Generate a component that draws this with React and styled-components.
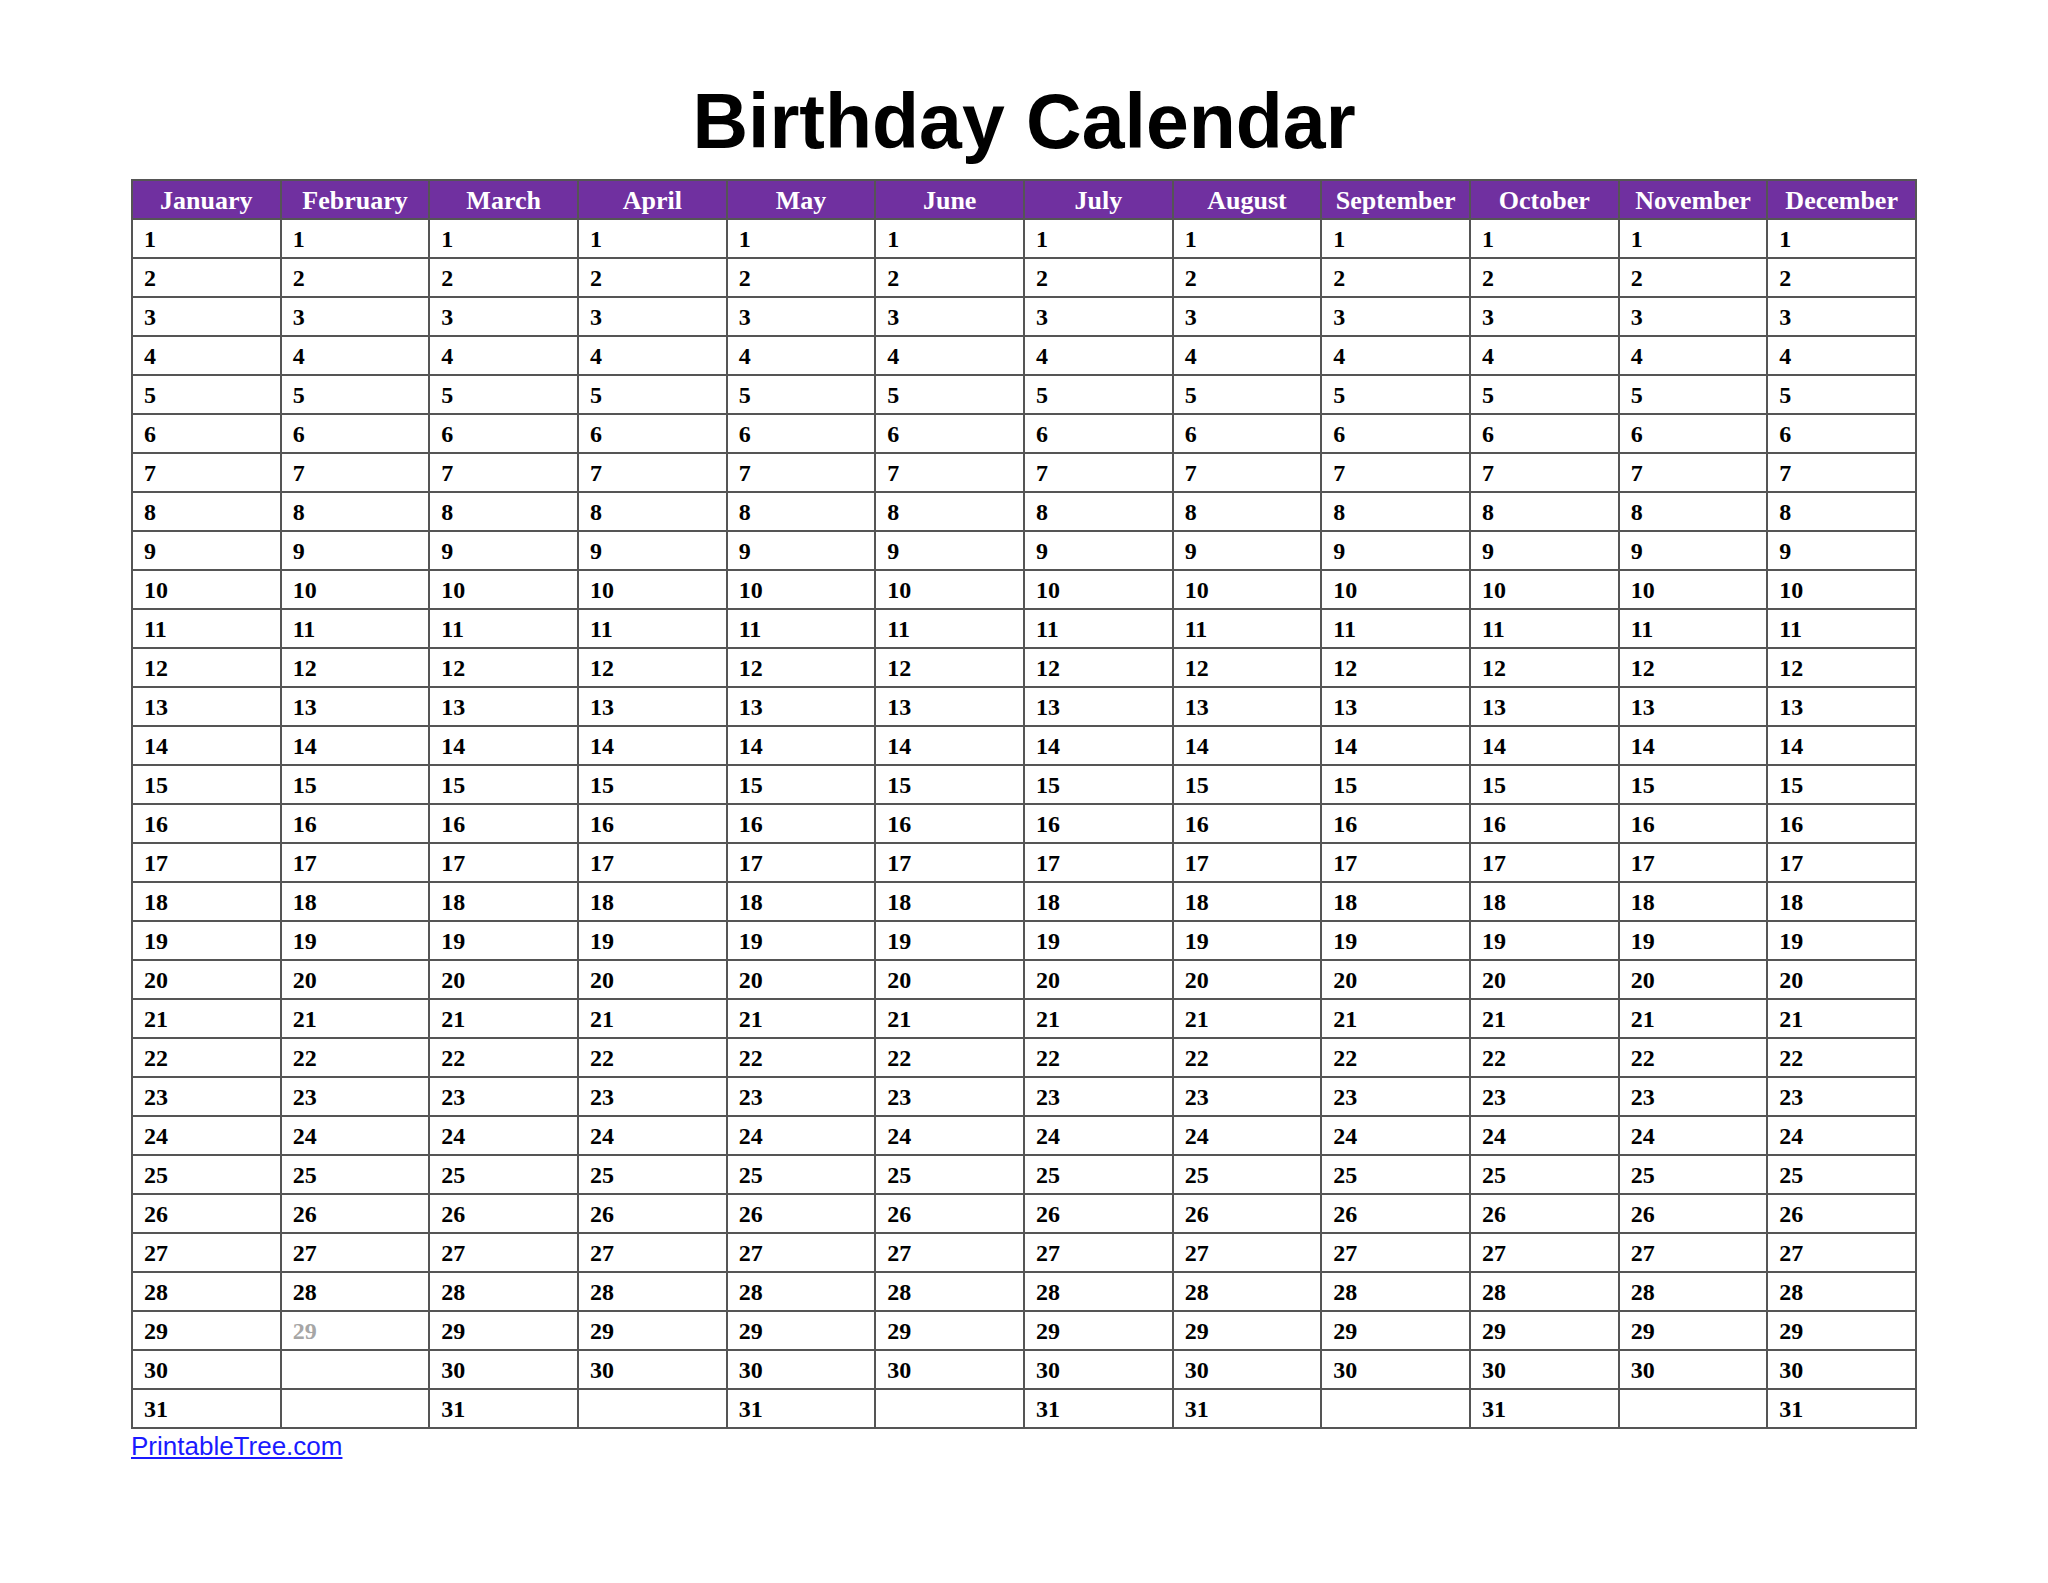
import React from 'react'
import styled, { createGlobalStyle } from 'styled-components'

const MONTHS = [
  { name: 'January', days: 31 },
  { name: 'February', days: 29 },
  { name: 'March', days: 31 },
  { name: 'April', days: 30 },
  { name: 'May', days: 31 },
  { name: 'June', days: 30 },
  { name: 'July', days: 31 },
  { name: 'August', days: 31 },
  { name: 'September', days: 30 },
  { name: 'October', days: 31 },
  { name: 'November', days: 30 },
  { name: 'December', days: 31 },
]

const GlobalStyle = createGlobalStyle`
  html, body {
    margin: 0;
    padding: 0;
    background: #ffffff;
  }
`

const Page = styled.div`
  width: 2048px;
  min-height: 1583px;
  box-sizing: border-box;
  padding: 83px 131px 0 131px;
  display: flex;
  flex-direction: column;
`

const Title = styled.h1`
  margin: 0 0 19px 0;
  font-family: 'Liberation Sans', Arial, sans-serif;
  font-weight: 700;
  font-size: 77px;
  line-height: 77px;
  text-align: center;
  color: #000;
`

const Grid = styled.div`
  display: grid;
  grid-template-columns: repeat(12, 1fr);
  grid-auto-rows: 37px;
  gap: 2px;
  padding: 2px;
  background: #555555;
  width: 1786px;
  box-sizing: border-box;
`

const HeadCell = styled.div`
  background: #7030a0;
  color: #ffffff;
  font-family: 'Liberation Serif', 'Times New Roman', serif;
  font-weight: 700;
  font-size: 26px;
  display: flex;
  align-items: center;
  justify-content: center;
  padding-top: 2px;
  box-sizing: border-box;
`

const DayCell = styled.div`
  background: #ffffff;
  color: ${(p) => (p.$muted ? '#a6a6a6' : '#000000')};
  font-family: 'Liberation Serif', 'Times New Roman', serif;
  font-weight: 700;
  font-size: 24px;
  display: flex;
  align-items: center;
  padding-left: 11px;
  padding-top: 2px;
  box-sizing: border-box;
`

const Credit = styled.a`
  margin-top: 2px;
  align-self: flex-start;
  font-family: 'Liberation Sans', Arial, sans-serif;
  font-size: 26px;
  line-height: 30px;
  color: #1a1aff;
  text-decoration: underline;
`

export default function App() {
  const rows = []
  for (let d = 1; d <= 31; d++) {
    MONTHS.forEach((m) => {
      const has = d <= m.days
      rows.push(
        <DayCell key={`${m.name}-${d}`} $muted={m.name === 'February' && d === 29}>
          {has ? d : ''}
        </DayCell>
      )
    })
  }

  return (
    <>
      <GlobalStyle />
      <Page>
        <Title>Birthday Calendar</Title>
        <Grid>
          {MONTHS.map((m) => (
            <HeadCell key={m.name}>{m.name}</HeadCell>
          ))}
          {rows}
        </Grid>
        <Credit href="#">PrintableTree.com</Credit>
      </Page>
    </>
  )
}
